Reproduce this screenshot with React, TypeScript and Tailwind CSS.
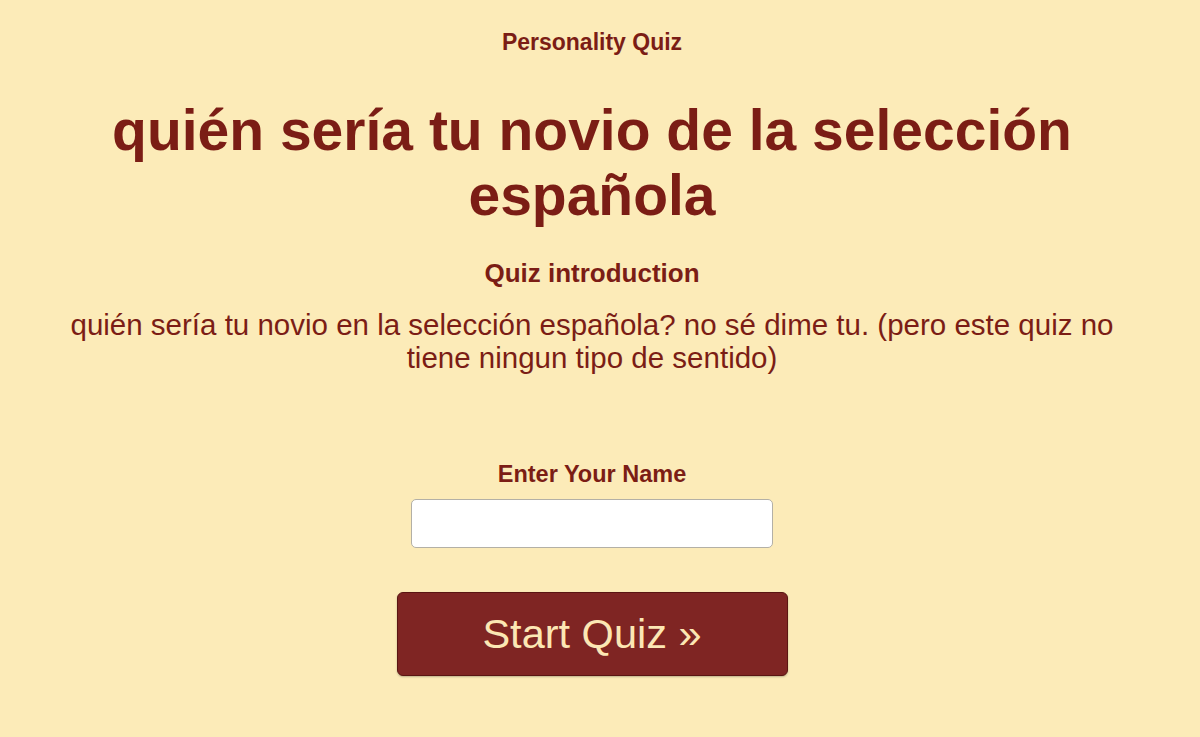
export default function App() {
  return (
    <div
      className="min-h-screen w-full bg-[#fcebb8] text-[#7b1d15]"
      style={{ fontFamily: '"Liberation Sans", Arial, sans-serif' }}
    >
      <div className="flex w-full flex-col items-center pr-[16px] pt-[28px] text-center">
        <p className="text-[23px] font-bold leading-[28px]">Personality Quiz</p>
        <h1 className="mt-[42px] max-w-[1100px] text-[57px] font-bold leading-[65px]">
          quién sería tu novio de la selección española
        </h1>
        <h2 className="mt-[30px] text-[26px] font-bold leading-[30px]">Quiz introduction</h2>
        <p className="mt-[20px] max-w-[1100px] text-[29.5px] leading-[33px]">
          quién sería tu novio en la selección española? no sé dime tu. (pero este quiz no tiene
          ningun tipo de sentido)
        </p>
        <label className="mt-[86px] text-[23.5px] font-bold leading-[28px]" htmlFor="name">
          Enter Your Name
        </label>
        <input
          id="name"
          type="text"
          className="mt-[11px] h-[49px] w-[362px] rounded-[5px] border border-[#b3b0a6] bg-white px-3 text-[20px] outline-none"
        />
        <button className="mt-[44px] h-[84px] w-[391px] rounded-[6px] border border-[#5a1512] bg-[#7f2523] text-[41.5px] text-[#fce7b4] shadow-[0_1px_2px_rgba(0,0,0,0.25)]">
          Start Quiz »
        </button>
      </div>
    </div>
  );
}
